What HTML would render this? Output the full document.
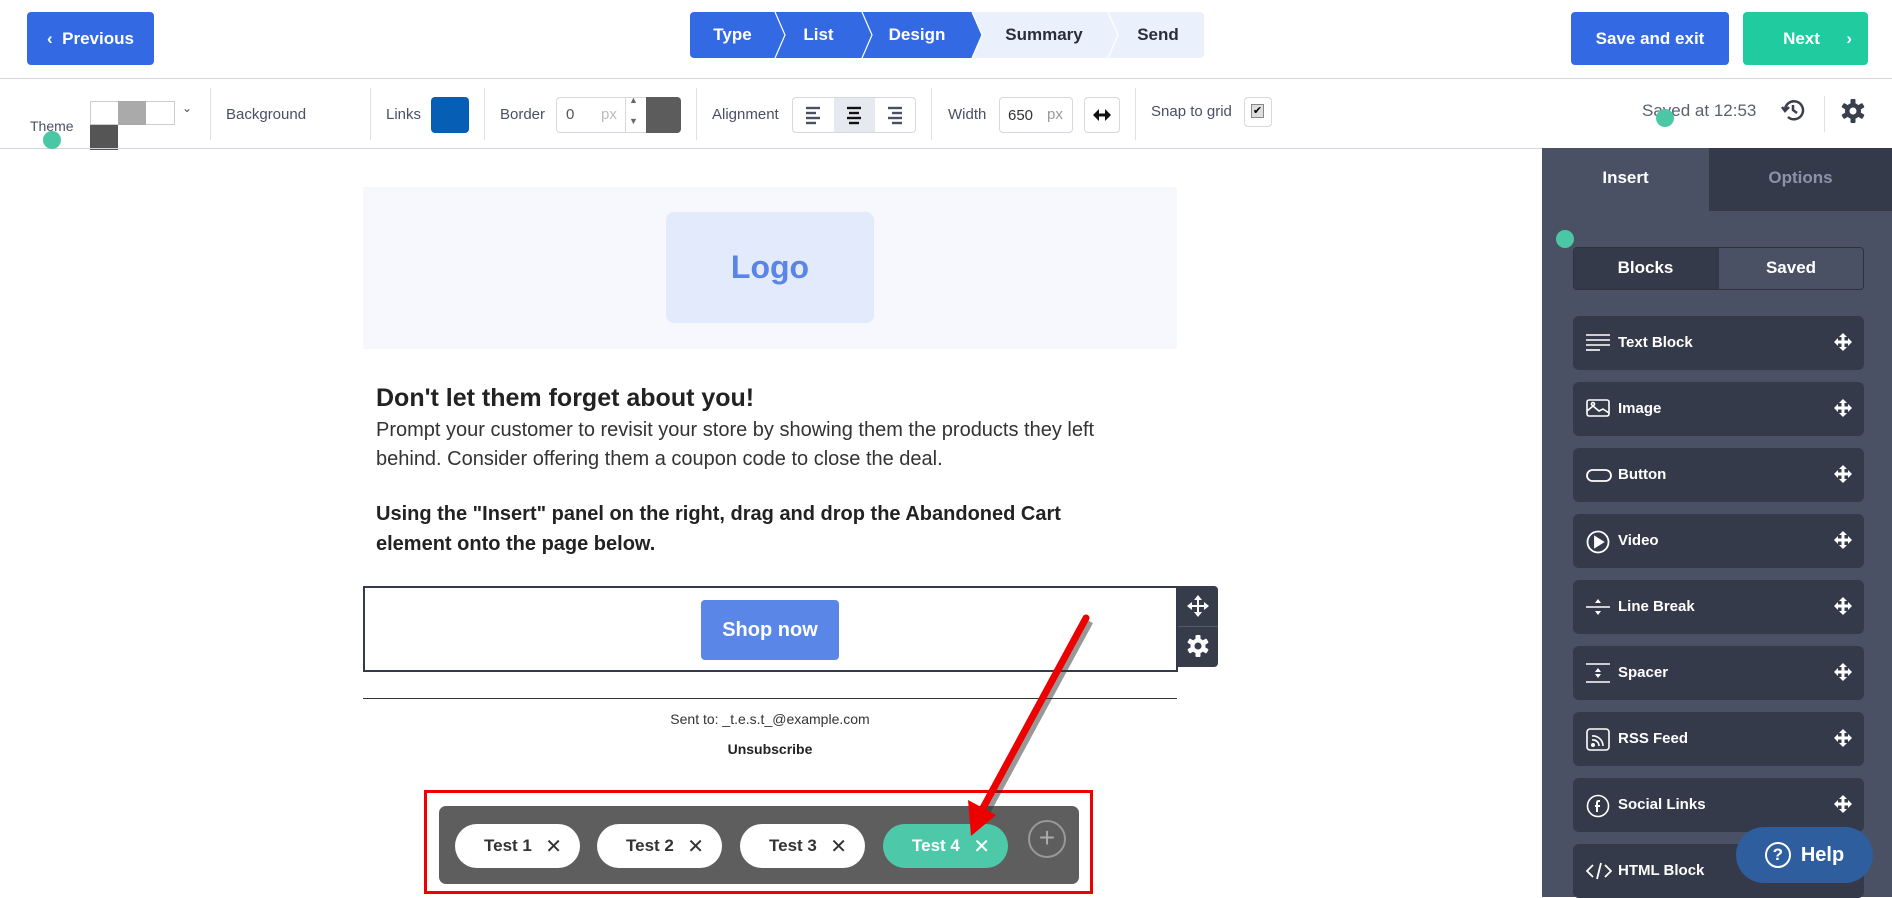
<!DOCTYPE html>
<html><head><meta charset="utf-8"><style>
*{box-sizing:border-box;margin:0;padding:0}
body{width:1892px;height:897px;overflow:hidden;background:#fff;font-family:"Liberation Sans",sans-serif;position:relative}
.a{position:absolute}
.btn{position:absolute;color:#fff;font-weight:bold;font-size:17px;display:flex;align-items:center;justify-content:center;border-radius:4px}
.step{position:absolute;top:12px;height:46px;display:flex;align-items:center;justify-content:center;font-weight:bold;font-size:17px}
.lbl{position:absolute;font-size:15px;color:#4a5064}
.div{position:absolute;top:88px;width:1px;height:52px;background:#dde0e6}
.item{position:absolute;left:1573px;width:291px;height:54px;background:#353a4a;border-radius:6px;color:#fff;font-weight:bold;font-size:15px}
.item span{position:absolute;left:45px;top:18px}
.item svg.i{position:absolute;left:13px;top:16px}
.item svg.m{position:absolute;right:12px;top:17px}
.pill{position:absolute;top:824px;width:125px;height:44px;border-radius:22px;background:#fff;font-size:17px;font-weight:bold;color:#333;display:flex;align-items:center;padding-left:29px}
.pill b{position:absolute;right:18px;font-weight:normal;font-size:20px}
.dot{position:absolute;width:18px;height:18px;border-radius:50%;background:#4cc7a6}
</style></head><body>

<div class="btn" style="left:27px;top:12px;width:127px;height:53px;background:#336ae3">‹&nbsp;&nbsp;Previous</div>
<div class="a" style="left:690px;top:12px;width:514px;height:46px;background:#eaf1fd;border-radius:4px"></div>
<div class="a" style="left:690px;top:12px;width:282px;height:46px;background:#336ae3;border-radius:4px 0 0 4px"></div>
<svg class="a" style="left:690px;top:12px" width="514" height="46"><polyline points="85,0 95,23 85,46" fill="none" stroke="#fff" stroke-width="1.2"/><polyline points="172,0 182,23 172,46" fill="none" stroke="#fff" stroke-width="1.2"/><polygon points="282,0 292,23 282,46" fill="#336ae3"/><polyline points="282,0 292,23 282,46" fill="none" stroke="#fff" stroke-width="1.2"/><polyline points="418,0 428,23 418,46" fill="none" stroke="#fff" stroke-width="1.2"/></svg>
<div class="step" style="left:690px;width:85px;color:#fff">Type</div>
<div class="step" style="left:775px;width:87px;color:#fff">List</div>
<div class="step" style="left:862px;width:110px;color:#fff">Design</div>
<div class="step" style="left:980px;width:128px;color:#2a2e3a">Summary</div>
<div class="step" style="left:1112px;width:92px;color:#2a2e3a">Send</div>
<div class="btn" style="left:1571px;top:12px;width:158px;height:53px;background:#336ae3">Save and exit</div>
<div class="btn" style="left:1743px;top:12px;width:125px;height:53px;background:#1fcb9f"><span style="margin-left:-8px">Next</span><span class="a" style="right:16px">›</span></div>
<div class="a" style="left:0;top:78px;width:1892px;height:1px;background:#d3d7e0"></div>

<div class="lbl" style="left:30px;top:118px;font-size:14px">Theme</div>
<div class="a" style="left:90px;top:101px;width:85px;height:24px;border:1px solid #ccc;background:#fff"></div>
<div class="a" style="left:118px;top:101px;width:28px;height:24px;background:#aaa"></div>
<div class="a" style="left:90px;top:125px;width:28px;height:25px;background:#555"></div>
<div class="lbl" style="left:182px;top:101px;font-size:12px">⌄</div>
<div class="div" style="left:210px"></div>
<div class="lbl" style="left:226px;top:106px">Background</div>
<div class="div" style="left:370px"></div>
<div class="lbl" style="left:386px;top:106px">Links</div>
<div class="a" style="left:431px;top:97px;width:38px;height:36px;background:#065fb5;border-radius:4px"></div>
<div class="div" style="left:484px"></div>
<div class="lbl" style="left:500px;top:106px">Border</div>
<div class="a" style="left:556px;top:97px;width:125px;height:36px;border:1px solid #d5d8de;border-radius:4px"></div>
<div class="lbl" style="left:566px;top:106px;color:#555">0</div>
<div class="lbl" style="left:601px;top:106px;color:#bbb">px</div>
<div class="a" style="left:625px;top:97px;width:1px;height:36px;background:#d5d8de"></div>
<div class="lbl" style="left:629px;top:95px;font-size:9px;color:#666">▲</div>
<div class="lbl" style="left:629px;top:116px;font-size:9px;color:#666">▼</div>
<div class="a" style="left:646px;top:97px;width:35px;height:36px;background:#5c5c5c;border-radius:0 4px 4px 0"></div>
<div class="div" style="left:696px"></div>
<div class="lbl" style="left:712px;top:106px">Alignment</div>
<div class="a" style="left:792px;top:97px;width:124px;height:36px;border:1px solid #d5d8de;border-radius:4px;overflow:hidden"><div class="a" style="left:41px;top:0;width:41px;height:36px;background:#e6e9f0"></div></div>
<svg class="a" style="left:792px;top:97px" width="124" height="36" stroke-width="2.4"><g stroke="#4a5064"><line x1="14" y1="11" x2="28" y2="11"/><line x1="14" y1="16" x2="24" y2="16"/><line x1="14" y1="21" x2="28" y2="21"/><line x1="14" y1="26" x2="24" y2="26"/></g><g stroke="#111"><line x1="55" y1="11" x2="69" y2="11"/><line x1="57" y1="16" x2="67" y2="16"/><line x1="55" y1="21" x2="69" y2="21"/><line x1="57" y1="26" x2="67" y2="26"/></g><g stroke="#4a5064"><line x1="96" y1="11" x2="110" y2="11"/><line x1="100" y1="16" x2="110" y2="16"/><line x1="96" y1="21" x2="110" y2="21"/><line x1="100" y1="26" x2="110" y2="26"/></g></svg>
<div class="div" style="left:931px"></div>
<div class="lbl" style="left:948px;top:106px">Width</div>
<div class="a" style="left:999px;top:97px;width:74px;height:36px;border:1px solid #d5d8de;border-radius:4px"></div>
<div class="lbl" style="left:1008px;top:107px;color:#333">650</div>
<div class="lbl" style="left:1047px;top:106px;color:#999">px</div>
<div class="a" style="left:1084px;top:97px;width:36px;height:36px;border:1px solid #d5d8de;border-radius:4px"></div>
<svg class="a" style="left:1084px;top:97px" width="36" height="36"><path d="M9 18 L15 12 V24 Z M27 18 L21 12 V24 Z" fill="#111"/><line x1="13" y1="18" x2="23" y2="18" stroke="#111" stroke-width="3"/></svg>
<div class="div" style="left:1135px"></div>
<div class="lbl" style="left:1151px;top:103px">Snap to grid</div>
<div class="a" style="left:1244px;top:97px;width:28px;height:30px;border:1px solid #d5d8de;border-radius:4px"></div>
<div class="a" style="left:1251px;top:104px;width:13px;height:14px;background:#ddd;border:1px solid #888;font-size:11px;line-height:12px;text-align:center">✔</div>
<div class="lbl" style="left:1642px;top:101px;font-size:17px;color:#5a6070">Saved at 12:53</div>
<svg class="a" style="left:1780px;top:97px" width="26" height="26" fill="none" stroke="#3a3f4e" stroke-width="2.5"><path d="M5 13 A9 9 0 1 1 8 20"/><path d="M2 10 L5 14 L9 10"/><path d="M13 8 V13 L17 16"/></svg>
<div class="a" style="left:1824px;top:96px;width:1px;height:36px;background:#dde0e6"></div>
<svg class="a" style="left:1840px;top:98px" width="26" height="26"><g fill="#3a3f4e"><circle cx="13" cy="13" r="8"/><rect x="10.5" y="1" width="5" height="24" rx="1"/><rect x="10.5" y="1" width="5" height="24" rx="1" transform="rotate(60 13 13)"/><rect x="10.5" y="1" width="5" height="24" rx="1" transform="rotate(120 13 13)"/></g><circle cx="13" cy="13" r="3.5" fill="#fff"/></svg>
<div class="a" style="left:0;top:148px;width:1542px;height:1px;background:#d3d7e0"></div>

<div class="a" style="left:363px;top:187px;width:814px;height:162px;background:#f6f8fe"></div>
<div class="a" style="left:666px;top:212px;width:208px;height:111px;background:#e3eafb;border-radius:8px;display:flex;align-items:center;justify-content:center;color:#5b84e8;font-weight:bold;font-size:32px">Logo</div>
<div class="a" style="left:376px;top:384px;font-size:25px;font-weight:bold;color:#222">Don't let them forget about you!</div>
<div class="a" style="left:376px;top:416px;width:770px;font-size:20px;line-height:29px;color:#333">Prompt your customer to revisit your store by showing them the products they left behind. Consider offering them a coupon code to close the deal.</div>
<div class="a" style="left:376px;top:499px;width:760px;font-size:20px;line-height:30px;color:#222;font-weight:bold">Using the "Insert" panel on the right, drag and drop the Abandoned Cart element onto the page below.</div>
<div class="a" style="left:363px;top:586px;width:815px;height:86px;border:2px solid #343a4a"></div>
<div class="btn" style="left:701px;top:600px;width:138px;height:60px;background:#5a86e8;font-size:20px">Shop now</div>
<div class="a" style="left:1178px;top:586px;width:40px;height:81px;background:#373c4b;border-radius:0 4px 4px 0"></div>
<div class="a" style="left:1178px;top:626px;width:40px;height:1px;background:#555b6b"></div>
<svg class="a" style="left:1186px;top:594px" width="24" height="24"><g fill="#fff"><path d="M12 1 L16 6 H8 Z M12 23 L8 18 H16 Z M1 12 L6 8 V16 Z M23 12 L18 16 V8 Z"/><rect x="11" y="5" width="2" height="14"/><rect x="5" y="11" width="14" height="2"/></g></svg>
<svg class="a" style="left:1186px;top:634px" width="24" height="24"><g fill="#fff"><circle cx="12" cy="12" r="7.5"/><rect x="9.5" y="1" width="5" height="22" rx="1"/><rect x="9.5" y="1" width="5" height="22" rx="1" transform="rotate(60 12 12)"/><rect x="9.5" y="1" width="5" height="22" rx="1" transform="rotate(120 12 12)"/></g><circle cx="12" cy="12" r="3.5" fill="#373c4b"/></svg>
<div class="a" style="left:363px;top:698px;width:814px;height:1px;background:#333"></div>
<div class="a" style="left:363px;top:711px;width:814px;text-align:center;font-size:14px;color:#333">Sent to: _t.e.s.t_@example.com</div>
<div class="a" style="left:363px;top:741px;width:814px;text-align:center;font-size:14px;color:#222;font-weight:bold">Unsubscribe</div>

<div class="a" style="left:424px;top:790px;width:669px;height:104px;border:3px solid #e00"></div>
<div class="a" style="left:439px;top:806px;width:640px;height:78px;background:#5e5e5e;border-radius:7px"></div>
<div class="pill" style="left:455px">Test 1<b>✕</b></div>
<div class="pill" style="left:597px">Test 2<b>✕</b></div>
<div class="pill" style="left:740px">Test 3<b>✕</b></div>
<div class="pill" style="left:883px;background:#4dc9a9;color:#fff">Test 4<b>✕</b></div>
<div class="a" style="left:1028px;top:820px;width:38px;height:38px;border:2px solid #999;border-radius:50%;color:#aaa;font-size:28px;line-height:32px;text-align:center">+</div>
<svg class="a" style="left:0;top:0" width="1892" height="897"><line x1="1089" y1="621" x2="984" y2="815" stroke="#333" stroke-width="9" opacity="0.5"/><line x1="1086" y1="618" x2="983" y2="808" stroke="#e00" stroke-width="7" stroke-linecap="round"/><polygon points="971,836 968,800 996,815" fill="#e00"/></svg>

<div class="a" style="left:1542px;top:148px;width:350px;height:749px;background:#4b5165"></div>
<div class="a" style="left:1709px;top:148px;width:183px;height:63px;background:#353a4a"></div>
<div class="a" style="left:1542px;top:168px;width:167px;text-align:center;color:#fff;font-weight:bold;font-size:17px">Insert</div>
<div class="a" style="left:1709px;top:168px;width:183px;text-align:center;color:#8c93a8;font-weight:bold;font-size:17px">Options</div>
<div class="a" style="left:1573px;top:247px;width:291px;height:43px;border:1px solid #2e3240;border-radius:4px;background:#4b5165;overflow:hidden"><div class="a" style="left:0;top:0;width:145px;height:43px;background:#353a4a"></div></div>
<div class="a" style="left:1573px;top:258px;width:145px;text-align:center;color:#fff;font-weight:bold;font-size:17px">Blocks</div>
<div class="a" style="left:1718px;top:258px;width:146px;text-align:center;color:#fff;font-weight:bold;font-size:17px">Saved</div>

<svg width="0" height="0" style="position:absolute"><defs><g id="mv" fill="#fff"><path d="M9 0 L13 4 H5 Z M9 18 L5 14 H13 Z M0 9 L4 5 V13 Z M18 9 L14 13 V5 Z"/><rect x="7.5" y="3" width="3" height="12"/><rect x="3" y="7.5" width="12" height="3"/></g></defs></svg>

<div class="item" style="top:316px"><svg class="i" width="24" height="22" stroke="#fff" stroke-width="1.6"><line x1="0" y1="3" x2="24" y2="3"/><line x1="0" y1="8" x2="24" y2="8"/><line x1="0" y1="13" x2="24" y2="13"/><line x1="0" y1="18" x2="14" y2="18"/></svg><span>Text Block</span><svg class="m" width="18" height="18"><use href="#mv"/></svg></div>
<div class="item" style="top:382px"><svg class="i" width="24" height="22" fill="none" stroke="#fff" stroke-width="1.6"><rect x="1" y="2" width="22" height="16" rx="2"/><path d="M1 13 L7 8 L13 13 L17 11 L23 15"/><circle cx="7" cy="6" r="1.5"/></svg><span>Image</span><svg class="m" width="18" height="18"><use href="#mv"/></svg></div>
<div class="item" style="top:448px"><svg class="i" width="26" height="22" fill="none" stroke="#fff" stroke-width="1.8"><rect x="1" y="6" width="24" height="11" rx="5.5"/></svg><span>Button</span><svg class="m" width="18" height="18"><use href="#mv"/></svg></div>
<div class="item" style="top:514px"><svg class="i" width="26" height="24" fill="none" stroke="#fff" stroke-width="1.8"><circle cx="12" cy="12" r="10.5"/><path d="M9 7 L17 12 L9 17 Z" fill="#fff"/></svg><span>Video</span><svg class="m" width="18" height="18"><use href="#mv"/></svg></div>
<div class="item" style="top:580px"><svg class="i" width="26" height="22"><line x1="0" y1="11" x2="24" y2="11" stroke="#fff" stroke-width="1.6"/><path d="M12 3 L15 7 H9 Z M12 19 L9 15 H15 Z" fill="#fff"/></svg><span>Line Break</span><svg class="m" width="18" height="18"><use href="#mv"/></svg></div>
<div class="item" style="top:646px"><svg class="i" width="26" height="22"><line x1="0" y1="2" x2="24" y2="2" stroke="#fff" stroke-width="1.6"/><line x1="0" y1="20" x2="24" y2="20" stroke="#fff" stroke-width="1.6"/><path d="M12 6 L15 10 H9 Z M12 16 L9 12 H15 Z" fill="#fff"/></svg><span>Spacer</span><svg class="m" width="18" height="18"><use href="#mv"/></svg></div>
<div class="item" style="top:712px"><svg class="i" width="26" height="24" fill="none" stroke="#fff" stroke-width="1.6"><rect x="1" y="1" width="22" height="21" rx="3"/><path d="M6 8 A10 10 0 0 1 17 18 M6 12 A6 6 0 0 1 13 18"/><circle cx="7" cy="17" r="1.2" fill="#fff"/></svg><span>RSS Feed</span><svg class="m" width="18" height="18"><use href="#mv"/></svg></div>
<div class="item" style="top:778px"><svg class="i" width="26" height="24" fill="none" stroke="#fff" stroke-width="1.6"><circle cx="12" cy="12" r="10.5"/><path d="M14 7 H12.5 Q11 7 11 9 V18 M9 12 H14" stroke-width="2"/></svg><span>Social Links</span><svg class="m" width="18" height="18"><use href="#mv"/></svg></div>
<div class="item" style="top:844px"><svg class="i" width="26" height="22" fill="none" stroke="#fff" stroke-width="1.8"><path d="M7 5 L1 11 L7 17 M19 5 L25 11 L19 17 M15 3 L11 19"/></svg><span>HTML Block</span></div>
<div class="a" style="left:1736px;top:827px;width:137px;height:56px;border-radius:28px;background:#2e5e9e;color:#fff;font-weight:bold;font-size:20px;display:flex;align-items:center;justify-content:center"><span style="display:inline-block;width:26px;height:26px;border:2.5px solid #fff;border-radius:50%;font-size:17px;line-height:21px;text-align:center;margin-right:10px">?</span>Help</div>

<div class="dot" style="left:43px;top:131px"></div>
<div class="dot" style="left:1656px;top:109px"></div>
<div class="dot" style="left:1556px;top:230px"></div>
</body></html>
